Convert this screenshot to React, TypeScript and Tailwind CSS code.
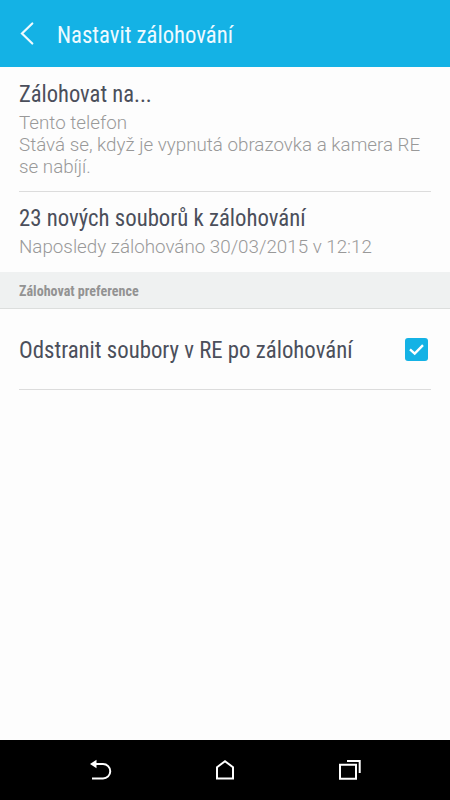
import React from "react";

const condensed = "font-[Roboto,sans-serif] [font-stretch:75%] whitespace-nowrap origin-left w-max";
const heading = condensed + " text-[23px] leading-[28px] text-[#4b4f5b]";
const detail = "font-[Roboto,sans-serif] font-light text-[18.8px] leading-[22px] text-[#999999] whitespace-nowrap";

function NavBar() {
  return (
    <nav className="h-[60px] shrink-0 bg-black flex items-center">
      <svg viewBox="0 0 450 60" className="w-[450px] h-[60px]" fill="none" stroke="#fff" strokeWidth="2">
        <path d="M94 24h9a7.250 7.250 0 0 1 0 14.500H92" />
        <path d="M90 24l6.500-4.300v8.600z" fill="#fff" stroke="none" />
        <path d="M217 27.300L225 21.200l8 6.100V38.500h-16z" />
        <path d="M340 24.700h16v14h-16z" />
        <path d="M347 21h12.700v12" />
      </svg>
    </nav>
  );
}

export default function App() {
  return (
    <div className="w-[450px] h-[800px] flex flex-col bg-[#fdfdfd] overflow-hidden">
      <header className="h-[67px] shrink-0 bg-[#14b2e5] flex items-start">
        <svg viewBox="0 0 57 67" className="w-[57px] h-[67px]" fill="none" stroke="#effaff" strokeWidth="2.2" strokeLinecap="round">
          <path d="M32.300 23.500L22 33.500l10.300 10" />
        </svg>
        <h1 className={condensed + " mt-[21px] text-[24px] leading-[28px] text-[#effaff] scale-x-[0.946]"}>Nastavit zálohování</h1>
      </header>

      <main className="flex-1 flex flex-col">
        <section className="h-[125px] mx-[19px] pt-[14px] border-b border-[#dcdcdc]">
          <h2 className={heading + " scale-x-[0.98]"}>Zálohovat na...</h2>
          <p className={detail + " mt-[3px]"}>Tento telefon</p>
          <p className={detail}>Stává se, když je vypnutá obrazovka a kamera RE</p>
          <p className={detail}>se nabíjí.</p>
        </section>
        <section className="h-[80px] mx-[19px] pt-[13px]">
          <h2 className={heading + " scale-x-[0.99]"}>23 nových souborů k zálohování</h2>
          <p className={detail + " mt-[3px]"}>Naposledy zálohováno 30/03/2015 v 12:12</p>
        </section>
        <div className="h-[37px] px-[19px] pt-[2px] bg-[#eff1f1] border-b border-[#dcdedd] flex items-center">
          <h3 className={condensed + " font-bold text-[15px] leading-[20px] text-[#939393] scale-x-[0.938]"}>Zálohovat preference</h3>
        </div>
        <label className="h-[81px] mx-[19px] border-b border-[#dcdcdc] flex items-center justify-between pr-[3px]">
          <span className={heading + " pt-[4px] scale-x-[0.991]"}>Odstranit soubory v RE po zálohování</span>
          <span className="w-[23px] h-[23px] rounded-[3px] bg-[#14b2e5] shrink-0">
            <svg viewBox="0 0 23 23" className="w-[23px] h-[23px]" fill="none" stroke="#fff" strokeWidth="2.400">
              <path d="M5 11.300l4.700 4.300 8.300-8.500" />
            </svg>
          </span>
        </label>
      </main>
      <NavBar />
    </div>
  );
}
